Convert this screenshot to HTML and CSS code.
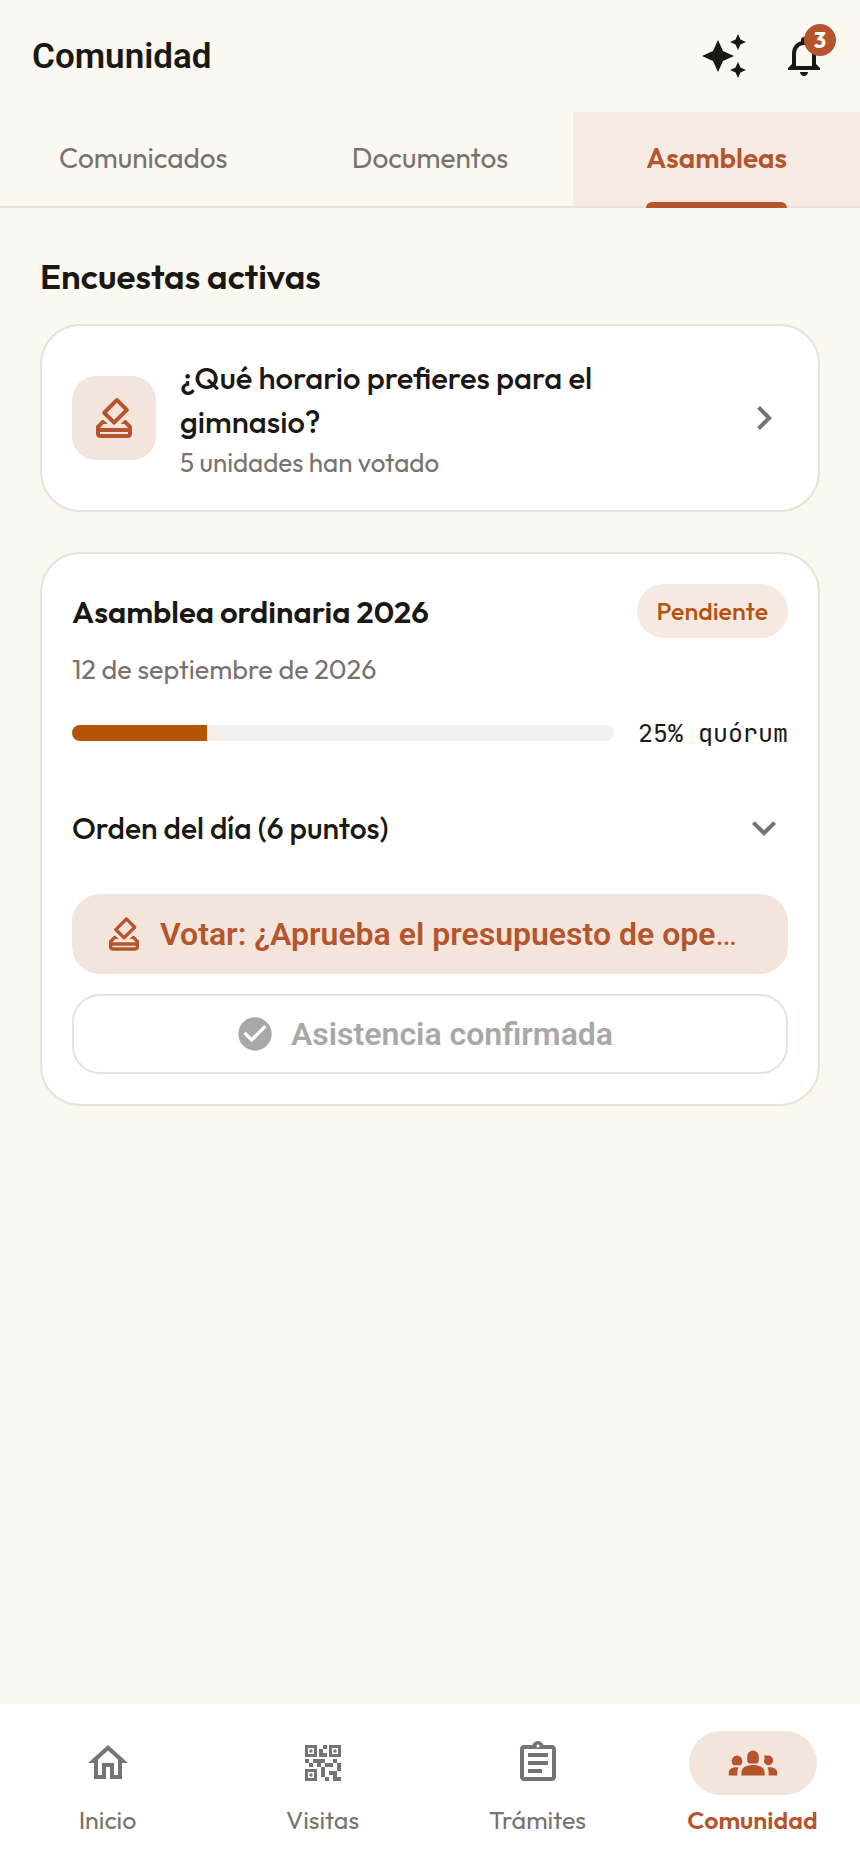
FILE: index.html
```html
<!DOCTYPE html>
<html lang="es">
<head>
    <meta charset="UTF-8">
    <meta name="viewport" content="width=device-width, initial-scale=1.0">
    <title>Comunidad</title>
    <link rel="stylesheet" href="styles.css">
</head>
<body>

<!-- Iconos compartidos -->
<svg class="sprite" aria-hidden="true">
    <symbol id="vote" viewBox="0 0 24 24">
        <path d="M18 13h-.68l-2 2h1.91L19 17H5l1.78-2h2.05l-2-2H6l-3 3v4c0 1.1.89 2 1.99 2H19c1.1 0 2-.89 2-2v-4l-3-3zm1 7H5v-1h14v1zm-7.66-4.98c.39.39 1.02.39 1.41 0l6.36-6.36c.39-.39.39-1.02 0-1.41L14.16 2.3c-.38-.4-1.01-.4-1.4-.01L6.39 8.66c-.39.39-.39 1.02 0 1.41l4.95 4.95zm2.12-10.61L17 7.95l-4.95 4.95-3.54-3.54 4.95-4.95z"/>
    </symbol>
</svg>

<header class="topbar">
    <h1>Comunidad</h1>
    <button type="button" class="icon-btn" aria-label="Asistente">
        <svg class="icon" viewBox="0 0 24 24"><path d="M19 9l1.25-2.75L23 5l-2.75-1.25L19 1l-1.25 2.75L15 5l2.75 1.25L19 9zm-7.5.5L9 4 6.5 9.5 1 12l5.500 2.500L9 20l2.500-5.500L17 12l-5.500-2.500zM19 15l-1.250 2.750L15 19l2.750 1.250L19 23l1.250-2.750L23 19l-2.750-1.250L19 15z"/></svg>
    </button>
    <button type="button" class="icon-btn" aria-label="Notificaciones">
        <svg class="icon" viewBox="0 0 24 24"><path d="M12 22c1.1 0 2-.9 2-2h-4c0 1.1.9 2 2 2zm6-6v-5c0-3.07-1.63-5.64-4.5-6.32V4c0-.83-.67-1.5-1.5-1.5s-1.5.67-1.5 1.5v.68C7.64 5.36 6 7.92 6 11v5l-2 2v1h16v-1l-2-2zm-2 1H8v-6c0-2.48 1.51-4.5 4-4.5s4 2.02 4 4.5v6z"/></svg>
        <span class="count">3</span>
    </button>
</header>

<nav class="tabs">
    <a href="#comunicados"><span>Comunicados</span></a>
    <a href="#documentos"><span>Documentos</span></a>
    <a href="#asambleas" class="active"><span>Asambleas</span></a>
</nav>

<main>
    <h2>Encuestas activas</h2>

    <a href="#encuesta" class="card poll">
        <span class="tile"><svg class="icon"><use href="#vote"/></svg></span>
        <span class="poll-text">
            <strong>¿Qué horario prefieres para el gimnasio?</strong>
            <small>5 unidades han votado</small>
        </span>
        <svg class="icon" viewBox="0 0 24 24"><path d="M10 6L8.59 7.41 13.17 12l-4.58 4.59L10 18l6-6z"/></svg>
    </a>

    <section class="card">
        <div class="row">
            <h3>Asamblea ordinaria 2026</h3>
            <span class="badge">Pendiente</span>
        </div>
        <p class="date">12 de septiembre de 2026</p>
        <div class="quorum">
            <div class="bar"><div class="fill" style="width: 25%"></div></div>
            <span>25% quórum</span>
        </div>
        <button type="button" class="agenda" aria-expanded="false">
            <span>Orden del día (6 puntos)</span>
            <svg class="icon" viewBox="0 0 24 24"><path d="M16.59 8.59L12 13.17 7.41 8.59 6 10l6 6 6-6z"/></svg>
        </button>
        <button type="button" class="btn btn-vote">
            <svg class="icon small"><use href="#vote"/></svg>
            <span>Votar: ¿Aprueba el presupuesto de ope<span class="dots">…</span></span>
        </button>
        <button type="button" class="btn btn-done" disabled>
            <svg class="icon small" viewBox="0 0 24 24"><path d="M12 2C6.48 2 2 6.48 2 12s4.48 10 10 10 10-4.48 10-10S17.52 2 12 2zm-2 15l-5-5 1.41-1.41L10 14.17l7.59-7.59L19 8l-9 9z"/></svg>
            <span>Asistencia confirmada</span>
        </button>
    </section>
</main>

<nav class="bottom">
    <a href="#inicio">
        <span class="pill"><svg class="icon" viewBox="0 0 24 24"><path d="M12 5.69l5 4.5V18h-2v-6H9v6H7v-7.81l5-4.5M12 3L2 12h3v8h6v-6h2v6h6v-8h3L12 3z"/></svg></span>
        Inicio
    </a>
    <a href="#visitas">
        <span class="pill"><svg class="icon" viewBox="0 0 24 24"><path d="M15 21h-2v-2h2v2zm-2-7h-2v5h2v-5zm8-2h-2v4h2v-4zm-2-2h-2v2h2v-2zM7 12H5v2h2v-2zm-2-2H3v2h2v-2zm7-5h2V3h-2v2zm-7.5-.5v3h3v-3h-3zM9 9H3V3h6v6zm-4.5 7.5v3h3v-3h-3zM9 21H3v-6h6v6zm7.5-16.5v3h3v-3h-3zM21 9h-6V3h6v6zm-2 10v-3h-4v2h2v3h4v-2h-2zm-2-7h-4v2h4v-2zm-4-2H7v2h2v2h2v-2h2v-2zm1-1V7h-2V5h-2v4h4zM6.75 5.25h-1.5v1.5h1.5v-1.5zm0 12h-1.5v1.5h1.5v-1.5zm12-12h-1.5v1.5h1.5v-1.5z"/></svg></span>
        Visitas
    </a>
    <a href="#tramites">
        <span class="pill"><svg class="icon" viewBox="0 0 24 24"><path d="M7 15h7v2H7zm0-4h10v2H7zm0-4h10v2H7z"/><path d="M19 3h-4.18C14.4 1.84 13.3 1 12 1c-1.3 0-2.4.84-2.82 2H5c-.14 0-.27.01-.4.04-.39.08-.74.28-1.01.55-.18.18-.33.4-.43.64-.1.23-.16.49-.16.77v14c0 .27.06.54.16.78s.25.45.43.64c.27.27.62.47 1.01.55.13.02.26.03.4.03h14c1.1 0 2-.9 2-2V5c0-1.1-.9-2-2-2zm-7-.25c.41 0 .75.34.75.75s-.34.75-.75.75-.75-.34-.75-.75.34-.75.75-.75zM19 19H5V5h14v14z"/></svg></span>
        Trámites
    </a>
    <a href="#comunidad" class="active">
        <span class="pill"><svg class="icon" viewBox="0 0 24 24"><path d="M6.2 18.2v-1.6c0-2.4 2.8-3.6 5.8-3.6s5.8 1.2 5.8 3.6v1.6zM9.9 12.2c-.5-.4-.8-1-.8-1.7V8.700a2.900 2.900 0 0 1 5.800 0v1.800c0 .7-.3 1.300-.8 1.700zM-.1 18.200v-1.500c0-1.700 1.900-2.700 4.900-2.500-.4.800-.6 1.500-.6 2.400v1.600zM19.800 18.200v-1.600c0-.9-.2-1.600-.6-2.400 3-.2 4.900.8 4.900 2.500v1.500zM2.200 13.100c-.5-.4-.8-1-.8-1.600v-.7a2.600 2.600 0 0 1 5.200 0v.7c0 .6-.3 1.200-.8 1.600zM17.300 8.300h2.300a2.400 2.400 0 1 1-1.700 4c-.4-.5-.5-1.200-.3-1.800.1-.6.5-1.300-.3-2.200z"/></svg></span>
        Comunidad
    </a>
</nav>

</body>
</html>
```
FILE: styles.css
```css
* {
    box-sizing: border-box;
}
body {
    margin: 0;
    min-height: 100vh;
    display: flex;
    flex-direction: column;
    background: #fbf8f1;
    color: #1a1814;
    font-family: Outfit, Lato, sans-serif;
    font-size: 27px;
}
h1, h2, h3, p {
    margin: 0;
}
a {
    color: inherit;
    text-decoration: none;
}
button {
    font: inherit;
    color: inherit;
    border: none;
    background: none;
    padding: 0;
}
.sprite {
    display: none;
}
.icon {
    width: 48px;
    height: 48px;
    flex: none;
    fill: currentColor;
    overflow: visible;
}
.icon.small {
    width: 40px;
    height: 40px;
}

/* Cabecera */
.topbar {
    display: flex;
    align-items: center;
    gap: 32px;
    height: 112px;
    padding: 0 32px;
}
.topbar h1 {
    flex: 1;
    padding-top: 2px;
    font-family: Roboto, sans-serif;
    font-size: 35px;
    font-weight: 600;
    line-height: 48px;
}
.icon-btn {
    position: relative;
    height: 48px;
}
.count {
    position: absolute;
    top: -8px;
    right: -8px;
    width: 32px;
    height: 32px;
    border-radius: 50%;
    background: #b5552d;
    color: #fff;
    font-size: 22px;
    font-weight: 700;
    line-height: 32px;
}

/* Pestañas */
.tabs {
    display: grid;
    grid-template-columns: repeat(3, 1fr);
    height: 96px;
    color: #78736e;
    font-size: 28px;
    border-bottom: 2px solid #e8e2d8;
}
.tabs a {
    display: flex;
    justify-content: center;
}
.tabs span {
    position: relative;
    line-height: 92px;
}
.tabs .active {
    color: #b5552d;
    font-weight: 600;
    background: rgba(181, 85, 45, 0.08);
}
.tabs .active span::after {
    content: "";
    position: absolute;
    left: 0;
    right: 0;
    bottom: -2px;
    height: 6px;
    border-radius: 6px 6px 0 0;
    background: #b5552d;
}

main {
    flex: 1;
    padding: 44px 40px;
}
h2 {
    font-size: 35px;
    font-weight: 600;
    line-height: 48px;
    margin-bottom: 24px;
}
.card {
    display: block;
    background: #fff;
    border: 2px solid #e8e2d8;
    border-radius: 40px;
    padding: 30px;
    margin-bottom: 40px;
}
.poll {
    display: flex;
    align-items: center;
    gap: 24px;
    padding: 28px 30px;
}
.poll > .icon, .agenda .icon {
    color: #78736e;
}
.tile {
    display: flex;
    align-items: center;
    justify-content: center;
    width: 84px;
    height: 84px;
    border-radius: 24px;
    background: #f3e5dc;
    color: #b5552d;
}
.poll-text {
    flex: 1;
    padding: 2px 72px 0 0;
}
.poll-text strong {
    display: block;
    font-size: 31px;
    font-weight: 500;
    line-height: 44px;
}
.poll-text small {
    display: block;
    color: #78736e;
    font-size: 26px;
    line-height: 38px;
}

/* Asamblea */
.row {
    display: flex;
    align-items: center;
    justify-content: space-between;
}
h3 {
    font-size: 31px;
    font-weight: 600;
}
.badge {
    padding: 0 20px;
    border-radius: 27px;
    background: #f6e9e1;
    color: #b45309;
    font-size: 25px;
    font-weight: 500;
    line-height: 54px;
}
.date {
    margin-top: 12px;
    color: #78736e;
    line-height: 38px;
}
.quorum {
    display: flex;
    align-items: center;
    gap: 24px;
    margin-top: 26px;
    font-family: "JetBrains Mono", "DejaVu Sans Mono", monospace;
    font-size: 25px;
    line-height: 38px;
}
.bar {
    flex: 1;
    height: 16px;
    border-radius: 8px;
    background: #f2efed;
    overflow: hidden;
}
.fill {
    height: 100%;
    background: #b45309;
}
.agenda {
    display: flex;
    align-items: center;
    justify-content: space-between;
    width: 100%;
    height: 96px;
    margin: 28px 0 18px;
    font-size: 30px;
    font-weight: 500;
}
.btn {
    display: flex;
    align-items: center;
    justify-content: center;
    gap: 16px;
    width: 100%;
    height: 80px;
    padding: 0 44px 0 32px;
    border-radius: 28px;
    font-family: Roboto, sans-serif;
    font-size: 32px;
    font-weight: 600;
    white-space: nowrap;
}
.btn-vote {
    justify-content: flex-start;
    background: #f3e5dc;
    color: #b5552d;
}
.dots {
    font-weight: 400;
}
.btn-done {
    margin-top: 20px;
    border: 2px solid #e8e2d8;
    color: #a8a8a6;
}

/* Menú inferior */
.bottom {
    display: grid;
    grid-template-columns: repeat(4, 1fr);
    height: 160px;
    padding-top: 27px;
    background: #fff;
    color: #78736e;
    font-size: 25px;
    line-height: 50px;
}
.bottom a {
    display: flex;
    flex-direction: column;
    align-items: center;
}
.pill {
    display: flex;
    align-items: center;
    justify-content: center;
    width: 128px;
    height: 64px;
    border-radius: 32px;
}
.bottom .active {
    color: #b5552d;
    font-weight: 600;
}
.bottom .active .pill {
    background: #f3e5dc;
}
```
